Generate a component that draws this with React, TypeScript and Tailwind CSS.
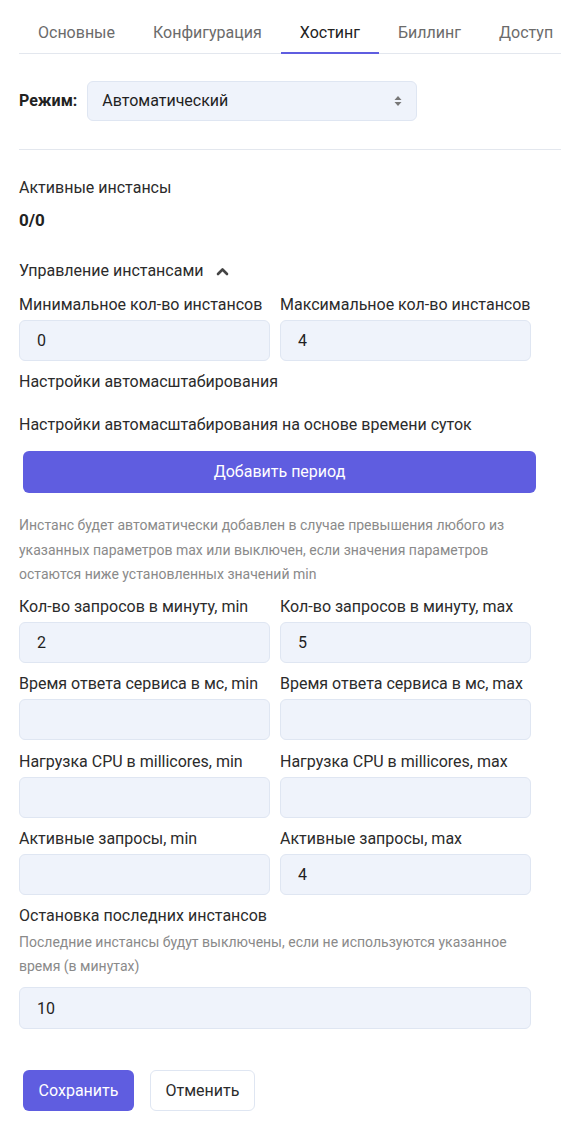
import { useState } from "react"

const tabs = ["Основные", "Конфигурация", "Хостинг", "Биллинг", "Доступ"]

const inputCls =
  "h-[41px] rounded-md border border-[#dfe6f2] bg-[#eff3fb] px-[17px] text-[16px] text-[#1f1f1f] outline-none"

function Field({ label, value }: { label: string; value?: string }) {
  return (
    <div className="flex flex-col">
      <label className="leading-[24px] text-[16px] text-[#2b2b2b] whitespace-nowrap">{label}</label>
      <input className={inputCls + " mt-[3px] w-full"} defaultValue={value ?? ""} />
    </div>
  )
}

function Pair({ left, right }: { left: [string, string?]; right: [string, string?] }) {
  return (
    <div className="grid w-[512px] grid-cols-2 gap-[10px]">
      <Field label={left[0]} value={left[1]} />
      <Field label={right[0]} value={right[1]} />
    </div>
  )
}

export default function App() {
  const [open, setOpen] = useState(true)

  return (
    <div
      className="min-h-screen bg-white pl-[19px] pb-10 text-[#2b2b2b]"
      style={{ fontFamily: "Roboto, 'Noto Sans', sans-serif" }}
    >
      <div className="flex border-b border-[#e3e7ee] pt-[13px]">
        {tabs.map((t) => (
          <div
            key={t}
            className={
              "-mb-px flex h-[41px] items-center whitespace-nowrap border-b-2 px-[19px] text-[16px] " +
              (t === "Хостинг"
                ? "border-[#5f5de0] text-[#222]"
                : "border-transparent text-[#6b6b6b]")
            }
          >
            {t}
          </div>
        ))}
      </div>

      <div className="mt-[27px] flex items-center gap-[10px]">
        <span className="text-[16px] font-bold text-[#222]">Режим:</span>
        <div className="relative flex h-[40px] w-[330px] items-center rounded-md border border-[#dfe6f2] bg-[#eff3fb] px-[14px] text-[16px] text-[#1f1f1f]">
          Автоматический
          <svg className="absolute right-[14px] top-1/2 -translate-y-1/2" width="8" height="12" viewBox="0 0 8 12">
            <path d="M4 1 L7.5 5 H0.5 Z" fill="#777" />
            <path d="M4 11 L7.5 7 H0.5 Z" fill="#777" />
          </svg>
        </div>
      </div>

      <div className="mt-[28px] border-t border-[#e3e7ee]" />

      <div className="mt-[26px] leading-[24px] text-[16px]">Активные инстансы</div>
      <div className="mt-[8px] leading-[24px] text-[17px] font-bold text-[#222]">0/0</div>

      <button
        onClick={() => setOpen(!open)}
        className="mt-[27px] flex items-center gap-[12px] leading-[24px] text-[16px] text-[#2b2b2b]"
      >
        Управление инстансами
        <svg width="13" height="9" viewBox="0 0 13 9" className={open ? "" : "rotate-180"}>
          <path d="M2 7 L6.5 2.5 L11 7" stroke="#444" strokeWidth="2.6" fill="none" strokeLinecap="round" strokeLinejoin="round" />
        </svg>
      </button>

      {open && (
        <>
          <div className="mt-[10px]">
            <Pair left={["Минимальное кол-во инстансов", "0"]} right={["Максимальное кол-во инстансов", "4"]} />
          </div>

          <div className="mt-[9px] leading-[24px] text-[16px]">Настройки автомасштабирования</div>
          <div className="mt-[19px] leading-[24px] text-[16px]">
            Настройки автомасштабирования на основе времени суток
          </div>
          <button className="mt-[14px] ml-[4px] h-[42px] w-[513px] rounded-md bg-[#5f5de0] text-[16px] text-white">
            Добавить период
          </button>

          <p className="mt-[20px] w-[500px] leading-[24.5px] text-[14px] text-[#8a8a8a]">
            Инстанс будет автоматически добавлен в случае превышения любого из указанных параметров max или
            выключен, если значения параметров остаются ниже установленных значений min
          </p>

          <div className="mt-[8px] flex flex-col gap-[9.5px]">
            <Pair left={["Кол-во запросов в минуту, min", "2"]} right={["Кол-во запросов в минуту, max", "5"]} />
            <Pair left={["Время ответа сервиса в мс, min"]} right={["Время ответа сервиса в мс, max"]} />
            <Pair left={["Нагрузка CPU в millicores, min"]} right={["Нагрузка CPU в millicores, max"]} />
            <Pair left={["Активные запросы, min"]} right={["Активные запросы, max", "4"]} />
          </div>

          <div className="mt-[9px] leading-[24px] text-[16px]">Остановка последних инстансов</div>
          <p className="mt-[2px] w-[500px] leading-[24px] text-[14px] text-[#8a8a8a]">
            Последние инстансы будут выключены, если не используются указанное время (в минутах)
          </p>
          <input className={inputCls + " mt-[9px] block w-[512px] h-[42px]"} defaultValue="10" />
        </>
      )}

      <div className="mt-[41px] flex gap-[16px] pl-[4px]">
        <button className="h-[41px] w-[111px] rounded-md bg-[#5f5de0] text-[16px] text-white">Сохранить</button>
        <button className="h-[41px] w-[105px] rounded-md border border-[#dfe6f2] bg-white text-[16px] text-[#2b2b2b]">
          Отменить
        </button>
      </div>
    </div>
  )
}
